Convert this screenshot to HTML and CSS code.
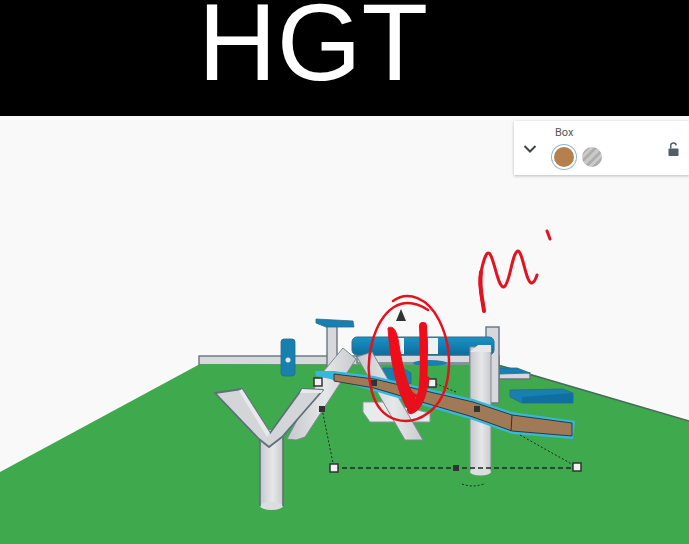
FILE: index.html

```html
<!DOCTYPE html>
<html lang="en">
<head>
  <meta charset="UTF-8">
  <meta name="viewport" content="width=device-width, initial-scale=1.0">
  <title>HGT</title>
  <link rel="stylesheet" href="styles.css">
</head>
<body>
  <header class="caption">HGT</header>

  <main class="workplane">
    <svg class="scene" viewBox="0 116 689 428" width="689" height="428">
      <defs>
        <linearGradient id="tube" x1="0" x2="1" y1="0" y2="0">
          <stop offset="0" stop-color="#c6c8cc"/>
          <stop offset="0.55" stop-color="#e6e7e8"/>
          <stop offset="1" stop-color="#c8cacd"/>
        </linearGradient>
        <linearGradient id="roll" x1="0" x2="0" y1="0" y2="1">
          <stop offset="0" stop-color="#1b93c4"/>
          <stop offset="1" stop-color="#0c6c9c"/>
        </linearGradient>
      </defs>

      <!-- back wall and ground -->
      <rect class="part" x="199" y="356" width="300" height="9"/>
      <polygon class="ground" points="0,472 200,364 498,365 689,421 689,544 0,544"/>
      <path class="ground-edge" d="M498 365 L689 421"/>

      <!-- far shapes -->
      <rect class="blue" x="281" y="339" width="14" height="37" rx="3"/>
      <circle cx="288" cy="360" r="2.500" fill="#e4e6e8"/>
      <rect class="part" x="327" y="325" width="10" height="42"/>
      <polygon class="blue" points="316,319 353,321 354,327 326,327 316,323"/>
      <polygon class="part" points="499,368 530,373 530,379 499,379"/>
      <polygon class="blue" points="499,368 517,368 530,373 499,374"/>
      <polygon class="blue" points="510,390 563,389 573,393 573,403 522,403 510,397"/>
      <polygon class="blue-side" points="522,397 573,393 573,403 522,403"/>
      <rect class="part" x="486" y="327" width="13" height="76"/>

      <!-- roller on its frame -->
      <rect class="part" x="357" y="355" width="113" height="8"/>
      <rect x="352" y="337" width="142" height="18" rx="5" fill="url(#roll)" stroke="#2f6f8f"/>
      <rect x="395" y="338" width="9" height="16" fill="#f1f2f2"/>
      <rect x="428" y="338" width="10" height="16" fill="#f1f2f2"/>
      <ellipse cx="430" cy="363" rx="17" ry="3" fill="#1780b0"/>
      <polygon class="blue" points="383,368 403,368 411,373 411,384 383,384"/>
      <polygon class="white-box" points="363,402 383,402 430,413 430,422 370,422 363,412"/>
      <polygon class="tube" points="357,357 372,352 423,440 405,440"/>
      <polygon class="tube" points="343,348 356,359 305,437 296,440 287,439 323,372"/>

      <!-- Y shape -->
      <rect x="260" y="430" width="23" height="76" fill="url(#tube)"/>
      <ellipse cx="271.500" cy="506" rx="11.500" ry="4" fill="#dcdde0"/>
      <path class="edge" d="M260 432 V506 M283 432 V506"/>
      <polygon class="y-arm" points="215,393 242,389 270,433 302,389 323,390 282,437 269,447 259,439"/>
      <polygon class="y-face" points="239,391 242,389 270,433 267,437"/>
      <polygon class="y-face" points="302,389 323,390 321,393 300,393"/>

      <!-- front post -->
      <rect x="470" y="347" width="21" height="125" fill="url(#tube)" stroke="#7f8b94"/>
      <ellipse cx="480.500" cy="472" rx="10.500" ry="3.500" fill="#dcdde0"/>
      <polygon points="470,352 478,345 491,345 491,352" fill="#e6e7e8"/>

      <!-- selected plank -->
      <polygon class="plank-glow" points="315,371 334,371 374,376 473,399 512,412 575,421 573,439 512,434 473,420 374,391 330,379 316,376"/>
      <polygon class="plank" points="334,374 374,379 473,402 512,415 572,423 572,436 512,431 473,417 374,388 334,381"/>
      <path class="plank-line" d="M512 415 L511 431"/>

      <!-- selection handles -->
      <path class="guide" d="M334 468 H577"/>
      <path class="guide-thin" d="M322 409 L334 468 M520 435 L577 467 M432 382 L456 392"/>
      <path class="guide-thin" d="M462 484 Q472 488 484 484"/>
      <rect class="handle" x="314" y="378" width="8" height="8"/>
      <rect class="handle" x="428" y="379" width="8" height="8"/>
      <rect class="handle" x="330" y="464" width="8" height="8"/>
      <rect class="handle" x="573" y="463" width="8" height="8"/>
      <rect class="node" x="319" y="406" width="6" height="6"/>
      <rect class="node" x="371" y="380" width="6" height="6"/>
      <rect class="node" x="474" y="406" width="6" height="6"/>
      <rect class="node" x="453" y="465" width="6" height="6"/>
      <polygon points="401,309 406,321 396,321" fill="#333"/>

      <!-- red pen marks -->
      <path class="pen-thin" d="M393 301 C408 290 428 298 439 320 C455 352 452 396 428 413 C408 428 380 422 372 392 C363 360 374 320 394 307 C404 301 416 302 428 310"/>
      <path class="pen-fill" d="M388 328 C393 325 397 330 399 345 C403 370 408 390 419 404 L410 412 C400 400 391 370 388 328 Z"/>
      <path class="pen-fat" d="M423 326 C424 350 425 375 422 392 C420 402 416 408 411 410"/>
      <path class="pen-mid" d="M396 362 C400 385 404 404 413 411 C424 404 426 390 428 378 M400 388 C405 400 410 406 418 405 M404 378 C408 392 414 398 422 396"/>
      <path class="pen-mark" d="M484 311 C482 296 478 285 481 272 C484 258 487 250 490 254 C495 262 498 288 504 287 C510 284 512 252 518 251 C523 252 526 284 532 283 C535 282 536 278 537 275"/>
      <path class="pen-fat-thin" d="M484 311 C482 296 479 288 481 272"/>
      <path class="pen-mark" d="M547 231 L550 239"/>
    </svg>

    <aside class="shape-panel">
      <svg class="chevron" viewBox="0 0 14 10" width="14" height="10">
        <path d="M1.500 2 L7 7.500 L12.500 2" fill="none" stroke="#3f4549" stroke-width="2"/>
      </svg>
      <div class="shape-info">
        <div class="shape-name">Box</div>
        <div class="swatches">
          <span class="swatch swatch-solid"></span>
          <span class="swatch swatch-hole"></span>
        </div>
      </div>
      <svg class="lock" viewBox="0 0 12 16" width="11" height="15">
        <path d="M3 7 V4.500 A3 3 0 0 1 9 3.500" fill="none" stroke="#50606b" stroke-width="1.600"/>
        <rect x="0.500" y="7" width="11" height="8" rx="1" fill="#50606b"/>
      </svg>
    </aside>
  </main>
</body>
</html>
```

FILE: styles.css

```css
body {
  margin: 0;
  width: 689px;
  height: 544px;
  overflow: hidden;
  font-family: "Liberation Sans", Arial, sans-serif;
  background-color: #f9f9f9;
}
.caption {
  height: 116px;
  overflow: hidden;
  padding-left: 198px;
  background-color: #000;
  color: #fff;
  font-size: 109px;
  line-height: 84px;
}
.workplane {
  position: relative;
  height: 428px;
}
.scene {
  display: block;
  filter: blur(0.5px);
}
.ground { fill: #3fa94e; }
.ground-edge { fill: none; stroke: #4b6b5a; stroke-width: 1.5; }
.part { fill: #d6d8dc; stroke: #66757f; stroke-width: 1.4; }
.blue { fill: #1780b0; stroke: #2b6a88; stroke-width: 0.8; }
.blue-side { fill: #0f6f9f; }
.white-box { fill: #e9eaeb; stroke: #8b959c; }
.tube { fill: url(#tube); stroke: #7f8b94; stroke-width: 1; }
.y-arm { fill: #d3d5d9; stroke: #5f6f7b; stroke-width: 1.800; stroke-linejoin: round; }
.y-face { fill: #e8e9eb; }
.edge { fill: none; stroke: #5f6f7b; stroke-width: 1.600; }
.plank-glow { fill: #35b8dc; }
.plank { fill: #a07a57; stroke: #2e3a40; stroke-width: 1; stroke-linejoin: round; }
.plank-line { fill: none; stroke: #3b2f26; stroke-width: 1; }
.guide { fill: none; stroke: #1c2a20; stroke-width: 1.400; stroke-dasharray: 5 3; }
.guide-thin { fill: none; stroke: #1c2a20; stroke-width: 1; stroke-dasharray: 2 2; }
.handle { fill: #f2f2f2; stroke: #333; stroke-width: 1.500; }
.node { fill: #2f3331; }
.pen-thin { fill: none; stroke: #e3121f; stroke-width: 2.500; stroke-linecap: round; }
.pen-fill { fill: #ee0d18; stroke: #ee0d18; }
.pen-fat { fill: none; stroke: #ee0d18; stroke-width: 8; stroke-linecap: round; stroke-linejoin: round; }
.pen-mid { fill: none; stroke: #e3121f; stroke-width: 3; stroke-linecap: round; }
.pen-mark { fill: none; stroke: #e3121f; stroke-width: 3; stroke-linecap: round; stroke-linejoin: round; }
.pen-fat-thin { fill: none; stroke: #e3121f; stroke-width: 4; stroke-linecap: round; }

.shape-panel {
  position: absolute;
  top: 5px;
  right: 0;
  width: 175px;
  height: 54px;
  box-sizing: border-box;
  display: flex;
  align-items: center;
  padding: 0 10px 0 9px;
  background-color: #fff;
  box-shadow: 0 1px 3px rgba(0, 0, 0, 0.25);
}
.chevron {
  margin-top: 2px;
}
.shape-info {
  margin-left: 18px;
  margin-top: -1px;
  flex: 1;
}
.shape-name {
  font-family: Roboto, "Liberation Sans", sans-serif;
  font-size: 11px;
  line-height: 14px;
  color: #555;
}
.swatches {
  display: flex;
  align-items: center;
  gap: 6px;
  margin-top: 5px;
  margin-left: -3px;
}
.swatch {
  display: block;
  width: 20px;
  height: 20px;
  border-radius: 50%;
}
.swatch-solid {
  background-color: #b5804c;
  border: 2px solid #fff;
  box-shadow: 0 0 0 1px #8fb4d6;
}
.swatch-hole {
  background: repeating-linear-gradient(135deg, #c9c9c9 0 3px, #aeaeae 3px 6px);
}
.lock {
  margin-top: 3px;
}
```
